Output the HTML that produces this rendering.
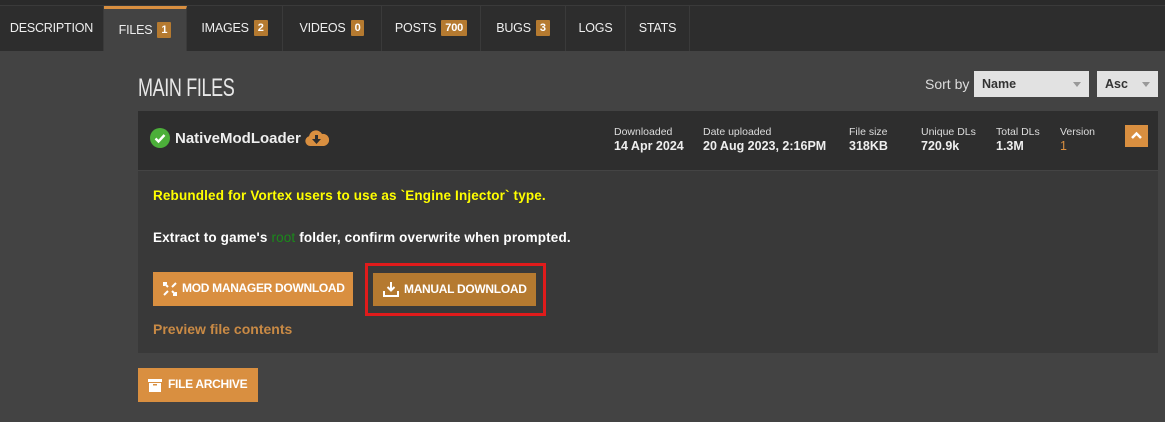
<!DOCTYPE html>
<html><head><style>
*{margin:0;padding:0;box-sizing:border-box}
body{width:1165px;height:422px;background:#434343;font-family:"Liberation Sans",sans-serif;position:relative;overflow:hidden;color:#fff}
.top{position:absolute;left:0;top:0;width:1165px;height:6px;background:#2a2a2a;border-bottom:1px solid #3a3a3a}
.tabs{position:absolute;left:0;top:6px;width:1165px;height:45px;background:#2d2d2d}
.tab{position:absolute;top:0;height:45px;font-size:12.5px;line-height:45px;text-align:center;color:#eee;border-right:1px solid #3a3a3a;letter-spacing:-0.2px}
.tab.act{background:#434343;border-top:3px solid #d98f40;line-height:42px}
.b{display:inline-block;background:#b57a30;color:#fff;font-size:11px;font-weight:bold;line-height:16px;padding:0 4px;border-radius:1px;margin-left:5px;vertical-align:1px}
.h1{position:absolute;left:138px;top:74px;font-size:25px;color:#e8e8e8;font-weight:normal;transform:scaleX(.72);transform-origin:left;letter-spacing:-0.5px}
.sort{position:absolute;left:925px;top:76px;font-size:14px;color:#ddd}
.sel{position:absolute;top:71px;height:26px;background:#e2e2e2;color:#333;font-size:12.5px;font-weight:bold;line-height:26px;padding-left:8px}
.sel:after{content:"";position:absolute;right:8px;top:11px;border:4px solid transparent;border-top:5px solid #999}
.card{position:absolute;left:138px;top:111px;width:1020px;height:242px;background:#393939}
.ch{position:absolute;left:0;top:0;width:1020px;height:60px;background:#2e2e2e;border-bottom:1px solid #444}
.f{position:absolute;top:14px;font-size:10.5px;color:#ddd;line-height:14px}
.f b{display:block;font-size:12.5px;color:#eee}
.btn{position:absolute;font-size:12px;font-weight:bold;color:#fff;line-height:33px;letter-spacing:-0.3px;white-space:nowrap}
</style></head><body>
<div class="top"></div>
<div class="tabs">
<div class="tab" style="left:0;width:104px">DESCRIPTION</div>
<div class="tab act" style="left:104px;width:83px">FILES<span class="b">1</span></div>
<div class="tab" style="left:187px;width:96px">IMAGES<span class="b">2</span></div>
<div class="tab" style="left:283px;width:99px">VIDEOS<span class="b">0</span></div>
<div class="tab" style="left:382px;width:99px">POSTS<span class="b">700</span></div>
<div class="tab" style="left:481px;width:85px">BUGS<span class="b">3</span></div>
<div class="tab" style="left:566px;width:60px">LOGS</div>
<div class="tab" style="left:626px;width:64px">STATS</div>
</div>
<div class="h1">MAIN FILES</div>
<div class="sort">Sort by</div>
<div class="sel" style="left:974px;width:115px">Name</div>
<div class="sel" style="left:1097px;width:61px">Asc</div>
<div class="card">
<div class="ch">
<svg style="position:absolute;left:12px;top:17px" width="20" height="20" viewBox="0 0 20 20"><circle cx="10" cy="10" r="10" fill="#4caf3a"/><path d="M5.5 10.5l3 3 6-6.5" stroke="#fff" stroke-width="2.4" fill="none"/></svg>
<div style="position:absolute;left:37px;top:19px;font-size:15px;font-weight:bold;color:#eee">NativeModLoader</div>
<svg style="position:absolute;left:166px;top:18px" width="26" height="18" viewBox="0 0 26 18"><path d="M6 17a5 5 0 0 1-1-9.8A7 7 0 0 1 18 5a5.5 5.5 0 0 1 2 12z" fill="#d98f40"/><path d="M11 6h3v4h3l-4.5 5-4.5-5h3z" fill="#2e2e2e"/></svg>
<div class="f" style="left:476px">Downloaded<b>14 Apr 2024</b></div>
<div class="f" style="left:565px">Date uploaded<b>20 Aug 2023, 2:16PM</b></div>
<div class="f" style="left:711px">File size<b>318KB</b></div>
<div class="f" style="left:783px">Unique DLs<b>720.9k</b></div>
<div class="f" style="left:858px">Total DLs<b>1.3M</b></div>
<div class="f" style="left:922px">Version<b style="color:#d98f40;font-weight:normal">1</b></div>
<div style="position:absolute;left:987px;top:14px;width:23px;height:22px;background:#d98f40"><svg width="23" height="22"><path d="M7 13l4.5-4.5L16 13" stroke="#fff" stroke-width="2.5" fill="none"/></svg></div>
</div>
<div style="position:absolute;left:15px;top:77px;font-size:13.5px;font-weight:bold;color:#ffff00;letter-spacing:0.15px">Rebundled for Vortex users to use as `Engine Injector` type.</div>
<div style="position:absolute;left:15px;top:119px;font-size:13.5px;font-weight:bold;color:#fff;letter-spacing:0.15px">Extract to game's <span style="color:#1a8a1a;font-weight:normal">root</span> folder, confirm overwrite when prompted.</div>
<div class="btn" style="left:15px;top:161px;width:200px;height:34px;background:#d98f40;padding-left:29px">MOD MANAGER DOWNLOAD
<svg style="position:absolute;left:10px;top:10px" width="14" height="14" viewBox="0 0 14 14"><path d="M1 1l4 4M13 1L9 5M1 13l4-4M13 13l-4-4M4 1h-3v3M10 13h3v-3" stroke="#fff" stroke-width="2" fill="none"/></svg></div>
<div style="position:absolute;left:227px;top:152px;width:181px;height:53px;border:3px solid #e01b1b"></div>
<div class="btn" style="left:235px;top:162px;width:163px;height:33px;background:#b57a30;padding-left:31px">MANUAL DOWNLOAD
<svg style="position:absolute;left:10px;top:9px" width="16" height="15" viewBox="0 0 16 15"><path d="M8 0v8M4.5 5L8 8.5 11.5 5" stroke="#fff" stroke-width="2" fill="none"/><path d="M1 9v5h14V9" stroke="#fff" stroke-width="2" fill="none"/></svg></div>
<div style="position:absolute;left:15px;top:210px;font-size:14px;font-weight:bold;color:#c98a45">Preview file contents</div>
</div>
<div class="btn" style="left:138px;top:368px;width:120px;height:34px;background:#d98f40;padding-left:30px">FILE ARCHIVE
<svg style="position:absolute;left:10px;top:11px" width="14" height="13" viewBox="0 0 14 13"><rect x="0" y="0" width="14" height="3" fill="#fff"/><rect x="1" y="4" width="12" height="9" fill="#fff"/><rect x="5" y="5" width="4" height="1.5" fill="#d98f40"/></svg></div>
</body></html>
